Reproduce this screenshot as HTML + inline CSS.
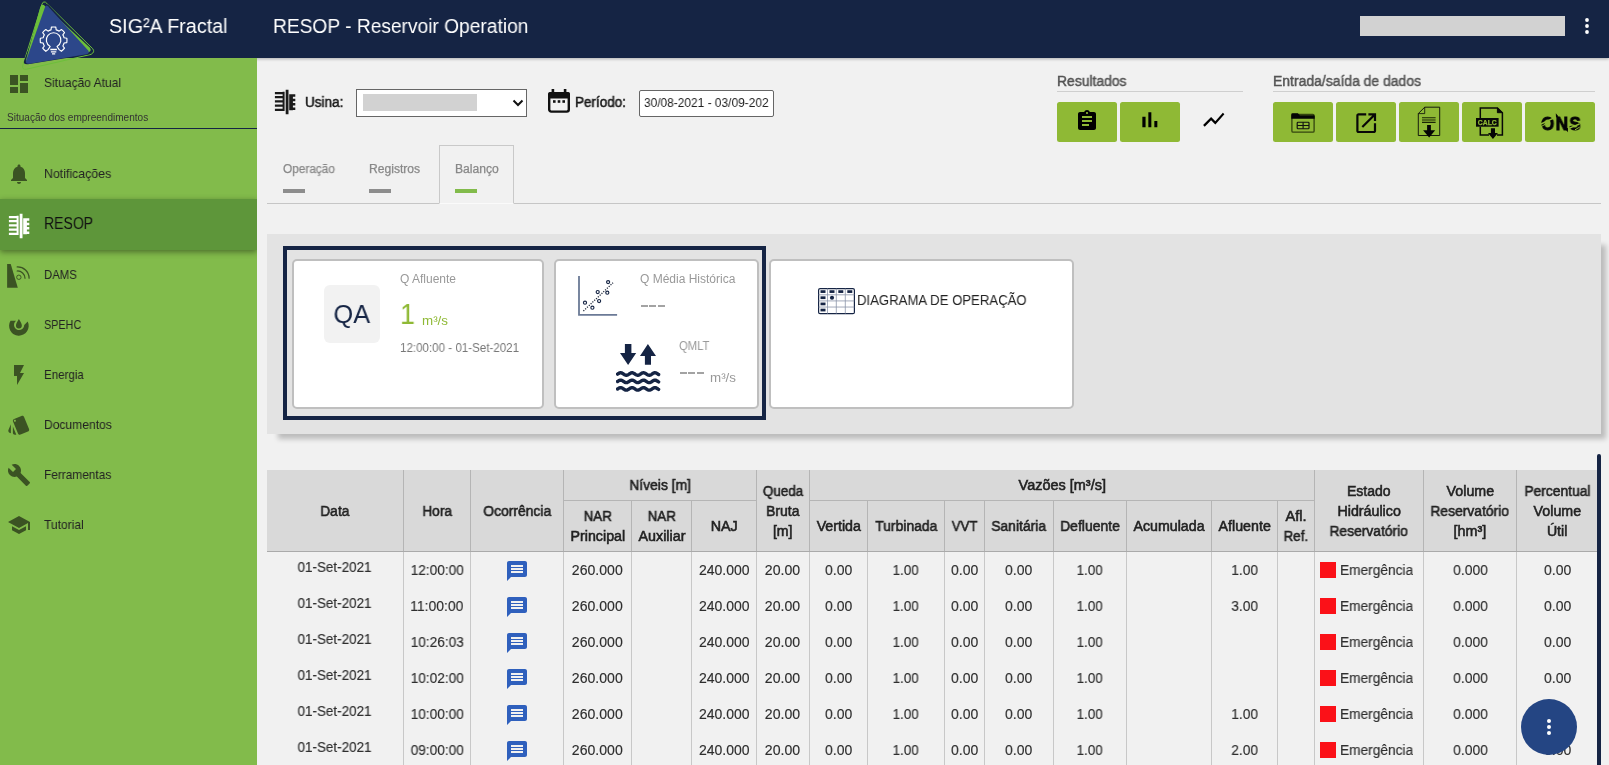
<!DOCTYPE html>
<html lang="pt-BR">
<head>
<meta charset="utf-8">
<title>RESOP - Reservoir Operation</title>
<style>
*{box-sizing:border-box;margin:0;padding:0}
html,body{width:1609px;height:765px;overflow:hidden;background:#f1f1f1;font-family:"Liberation Sans",sans-serif;color:#222}
.abs{position:absolute}
.sx{display:inline-block;white-space:nowrap;will-change:transform}
#hdr{position:absolute;left:0;top:0;width:1609px;height:58px;background:#152444;box-shadow:0 1px 3px rgba(0,0,0,.28);z-index:5}
#hdr .t{position:absolute;color:#fff;font-size:20px;white-space:nowrap;top:15px;line-height:22px}
#side{position:absolute;left:0;top:58px;width:257px;height:707px;background:#82bb4b;z-index:6;overflow:hidden}
.mi{position:absolute;left:0;width:257px;height:50px}
.mi svg{position:absolute;left:7px;top:13px;width:24px;height:24px;fill:#3b5323}
.mi .tx{position:absolute;left:44px;top:17px;font-size:13px;line-height:16px;color:#222;white-space:nowrap}
.lbl{position:absolute;font-size:14px;line-height:16px;color:#555;white-space:nowrap;-webkit-text-stroke:.45px #505050}
.gb{position:absolute;top:102px;height:40px;background:#8fb935;border-radius:2.500px}
.gb svg{position:absolute;will-change:transform}
.tab{position:absolute;font-size:12px;color:#888;white-space:nowrap;top:162px;line-height:14px;-webkit-text-stroke:.25px #888}
.tbar{position:absolute;top:189px;height:4px;width:22px;background:#8d8d8d}
.card{position:absolute;top:259px;height:150px;background:#fff;border:2px solid #bfbfbf;border-radius:5px}
.cl{position:absolute;font-size:12px;color:#999;white-space:nowrap;line-height:14px}
table{position:absolute;left:267px;top:470px;border-collapse:collapse;table-layout:fixed;width:1330px;font-size:14px}
th{background:#d9d9d9;font-weight:normal;color:#222;border-left:1px solid #b5b5b5;line-height:20px;-webkit-text-stroke:.55px #222;padding:2px 0 0 1px;vertical-align:middle;text-align:center;font-size:14px}
th.nb{border-left:none;padding-left:0}
th.g{border-bottom:1px solid #b5b5b5;padding-top:0}
tr.h2 th{border-bottom:1px solid #aaa;padding-top:0}
th.r2{border-bottom:1px solid #aaa}
td{height:36px;text-align:center;color:#2e2e2e;-webkit-text-stroke:.15px #2e2e2e;border-left:1px solid #c8c8c8;padding:2px 0 0 1px;vertical-align:middle;white-space:nowrap;line-height:20px}
td.nb{border-left:none;padding-left:0}
td.d .sx{position:relative;top:-3px}
td svg{display:block;margin:2px auto 0}
.sq{display:inline-block;width:16px;height:16px;background:#fb1118;vertical-align:-3px;margin-right:4px}
</style>
</head>
<body>
<!-- HEADER -->
<div id="hdr">
  <div class="t" style="left:109px"><span class="sx" style="transform-origin:0 50%;transform:scaleX(0.9872);">SIG²A Fractal</span></div>
  <div class="t" style="left:273px"><span class="sx" style="transform-origin:0 50%;transform:scaleX(0.9587);">RESOP - Reservoir Operation</span></div>
  <div class="abs" style="left:1360px;top:16px;width:205px;height:19.500px;background:#d2d2d2"></div>
  <svg class="abs" style="left:1575px;top:14px" width="24" height="24" viewBox="0 0 24 24" fill="#fff"><circle cx="12" cy="6" r="1.900"/><circle cx="12" cy="12" r="1.900"/><circle cx="12" cy="18" r="1.900"/></svg>
</div>
<!-- LOGO -->
<svg class="abs" style="left:10px;top:0;z-index:9" width="100" height="75" viewBox="0 0 100 75">
  <path d="M35.500 2.200 L82.700 48.700 Q85.300 52 81 54.400 L16.500 69.200 Q11.800 70 12.800 65.500 L32 4 Q33.300 .8 35.500 2.200Z" fill="none" stroke="#6cbf3a" stroke-width="1"/>
  <path d="M38.300 4.800 L81.300 50 Q83 53 79.500 54.200 L18 64.200 Q13 64.800 14 61 L35 6 Q36.300 3.300 38.300 4.800Z" fill="#152444"/>
  <path d="M33.800 5 L80 47.800 Q82 50.800 78.500 52.300 L20 63 Q15 63.500 16 60 L29.800 8.800 Q31.200 3.500 33.800 5Z" fill="#6cbf3a"/>
  <path d="M38 6.200 L78.200 50.500 Q80 53.400 76.500 54.200 L19.500 63.800 Q15 64.300 16.200 60.300 L34.800 7.700 Q36 4.500 38 6.200Z" fill="#2c478a"/>
  <g fill="none" stroke="#fff" stroke-width="1.150" stroke-linejoin="round"><path d="M38.03 49.65L35.81 51.30A13.40 13.40 0 0 1 32.70 48.19L34.35 45.97A10.80 10.80 0 0 1 33.12 43.00L30.38 42.60A13.40 13.40 0 0 1 30.38 38.20L33.12 37.80A10.80 10.80 0 0 1 34.35 34.83L32.70 32.61A13.40 13.40 0 0 1 35.81 29.50L38.03 31.15A10.80 10.80 0 0 1 41.00 29.92L41.40 27.18A13.40 13.40 0 0 1 45.80 27.18L46.20 29.92A10.80 10.80 0 0 1 49.17 31.15L51.39 29.50A13.40 13.40 0 0 1 54.50 32.61L52.85 34.83A10.80 10.80 0 0 1 54.08 37.80L56.82 38.20A13.40 13.40 0 0 1 56.82 42.60L54.08 43.00A10.80 10.80 0 0 1 52.85 45.97L54.50 48.19A13.40 13.40 0 0 1 51.39 51.30L49.17 49.65L47.03 46.45A7.30 7.30 0 1 0 40.17 46.45Z"/><path d="M40.300 49.500h6.600M40.900 51.800h5.400M42 53.800h3.200" stroke-width="1.300"/></g>
</svg>
<!-- SIDEBAR -->
<div id="side">
  <div class="mi" style="top:0"><svg viewBox="0 0 24 24" style="top:14px"><path d="M3 13h8V3H3v10zm0 8h8v-6H3v6zm10 0h8V11h-8v10zm0-18v6h8V3h-8z"/></svg><div class="tx"><span class="sx" style="transform-origin:0 50%;transform:scaleX(0.9273);">Situação Atual</span></div></div>
  <div class="abs" style="left:7px;top:53.500px;font-size:10px;line-height:12px;color:#333;white-space:nowrap"><span class="sx" style="transform-origin:0 50%;transform:scaleX(1.0036);">Situação dos empreendimentos</span></div>
  <div class="abs" style="left:0;top:70px;width:257px;height:1px;background:#152444"></div>
  <div class="mi" style="top:91px"><svg viewBox="0 0 24 24"><path d="M12 22c1.100 0 2-.900 2-2h-4c0 1.100.890 2 2 2zm6-6v-5c0-3.070-1.640-5.640-4.500-6.320V4c0-.830-.670-1.500-1.500-1.500s-1.500.670-1.500 1.500v.680C7.630 5.360 6 7.920 6 11v5l-2 2v1h16v-1l-2-2z"/></svg><div class="tx"><span class="sx" style="transform-origin:0 50%;transform:scaleX(0.9502);">Notificações</span></div></div>
  <div class="mi" style="top:141px;height:51px;background:#5e963a;box-shadow:0 2px 6px rgba(0,0,0,.42)">
    <svg viewBox="0 0 24 28" style="top:13px;fill:#fff;height:28px;overflow:visible"><path d="M1.900 3.9h9v2.300h-9zM1.900 8.0h9v2.300h-9zM1.900 12.2h9v2.300h-9zM1.900 16.5h9v2.300h-9zM1.900 20.7h9v2.300h-9zM9.600 3.850h2v19.100h-2zM12.700 1.800h2.800v24.400h-2.800zM16.200 6.200h3.700v16.100h-3.700zM19.500 6.3h2.800v2.500h-2.800zM19.500 10.8h2.800v2.500h-2.800zM19.500 15.1h2.800v2.500h-2.800zM19.500 19.6h2.800v2.500h-2.800z"/></svg>
    <div class="tx" style="font-size:16px;top:15px;line-height:20px;color:#111"><span class="sx" style="transform-origin:0 50%;transform:scaleX(0.8769);">RESOP</span></div>
  </div>
  <div class="mi" style="top:192px"><svg viewBox="0 0 24 26" style="height:26px;overflow:visible"><path d="M.1 1.100H3.700L10.800 24.700H.1z"/><circle cx="11.850" cy="14.250" r="2.200" fill="none" stroke="#3b5323" stroke-width=".95"/><path d="M10.200 8A7.400 7.400 0 0 1 18 15.200M10.200 3.900A11.500 11.500 0 0 1 22.100 15.200" fill="none" stroke="#3b5323" stroke-width="1.250" stroke-linecap="round"/></svg><div class="tx"><span class="sx" style="transform-origin:0 50%;transform:scaleX(0.8728);">DAMS</span></div></div>
  <div class="mi" style="top:242px"><svg viewBox="0 0 24 24" style="overflow:visible"><path d="M3.500 7.800A9.800 9.800 0 1 0 20.700 8.600L17.200 11.900A5.100 5.100 0 1 1 9.070 7.800Z"/><path d="M11.900 6C13.300 8.300 14.850 10.600 14.850 12.600a2.950 2.950 0 0 1-5.900 0C8.950 10.600 10.500 8.300 11.900 6z"/></svg><div class="tx"><span class="sx" style="transform-origin:0 50%;transform:scaleX(0.8301);">SPEHC</span></div></div>
  <div class="mi" style="top:292px"><svg viewBox="0 0 24 24"><path d="M7 2v11h3v9l7-12h-4l4-8z"/></svg><div class="tx"><span class="sx" style="transform-origin:0 50%;transform:scaleX(0.8878);">Energia</span></div></div>
  <div class="mi" style="top:342px"><svg viewBox="0 0 24 24"><path d="M2.530 19.650l1.340.560v-9.030l-2.430 5.860c-.410 1.020.080 2.190 1.090 2.610zm19.500-3.700L17.070 3.980c-.310-.750-1.040-1.210-1.810-1.230-.260 0-.530.040-.790.150L7.100 5.950c-.750.310-1.210 1.030-1.230 1.800-.010.270.040.540.150.800l4.960 11.970c.310.760 1.050 1.220 1.830 1.230.260 0 .520-.050.770-.150l7.360-3.050c1.020-.420 1.510-1.590 1.090-2.600zM7.880 8.750c-.550 0-1-.450-1-1s.450-1 1-1 1 .450 1 1-.450 1-1 1zm-2 11c0 1.100.900 2 2 2h1.450l-3.450-8.340v6.340z"/></svg><div class="tx"><span class="sx" style="transform-origin:0 50%;transform:scaleX(0.9288);">Documentos</span></div></div>
  <div class="mi" style="top:392px"><svg viewBox="0 0 24 24"><path d="M22.700 19l-9.100-9.100c.900-2.300.400-5-1.500-6.900-2-2-5-2.400-7.400-1.300L9 6 6 9 1.600 4.700C.4 7.100.9 10.100 2.900 12.100c1.900 1.900 4.600 2.400 6.900 1.500l9.100 9.100c.4.400 1 .4 1.400 0l2.300-2.300c.5-.4.500-1.100.1-1.400z"/></svg><div class="tx"><span class="sx" style="transform-origin:0 50%;transform:scaleX(0.9129);">Ferramentas</span></div></div>
  <div class="mi" style="top:442px"><svg viewBox="0 0 24 24"><path d="M5 13.180v4L12 21l7-3.820v-4L12 17l-7-3.820zM12 3L1 9l11 6 9-4.910V17h2V9L12 3z"/></svg><div class="tx"><span class="sx" style="transform-origin:0 50%;transform:scaleX(0.9279);">Tutorial</span></div></div>
</div>
<!-- TOOLBAR -->
<svg class="abs" style="left:273px;top:87.500px;overflow:visible" width="24" height="28" viewBox="0 0 24 28" fill="#1a1a1a"><path d="M1.900 3.9h9v2.300h-9zM1.900 8.0h9v2.300h-9zM1.900 12.2h9v2.300h-9zM1.900 16.5h9v2.300h-9zM1.900 20.7h9v2.300h-9zM9.600 3.850h2v19.100h-2zM12.700 1.800h2.800v24.400h-2.800zM16.200 6.200h3.700v16.100h-3.700zM19.500 6.3h2.800v2.500h-2.800zM19.500 10.8h2.800v2.500h-2.800zM19.500 15.1h2.800v2.500h-2.800zM19.500 19.6h2.800v2.500h-2.800z"/></svg>
<div class="abs" style="left:305px;top:94px;font-size:14px;line-height:16px;color:#1a1a1a;-webkit-text-stroke:.5px #1a1a1a;white-space:nowrap"><span class="sx" style="transform-origin:0 50%;transform:scaleX(0.9658);">Usina:</span></div>
<div class="abs" style="left:356px;top:89px;width:171px;height:28px;background:#fff;border:1px solid #666">
  <div class="abs" style="left:6px;top:4px;width:114px;height:17px;background:#d2d2d2"></div>
  <svg class="abs" style="left:155px;top:9px" width="12" height="8" viewBox="0 0 12 8"><path d="M1.500 1.500L6 6l4.500-4.500" fill="none" stroke="#111" stroke-width="2"/></svg>
</div>
<svg class="abs" style="left:548px;top:89px" width="22" height="24" viewBox="0 0 22 24" fill="#111"><rect x="1.200" y="4.200" width="19.600" height="18.400" rx="2" fill="none" stroke="#111" stroke-width="2.400"/><path d="M0 9.600V5a2 2 0 0 1 2-2h18a2 2 0 0 1 2 2v4.600z"/><rect x="3.600" y="0" width="2.600" height="4"/><rect x="15.800" y="0" width="2.600" height="4"/><rect x="5" y="11.200" width="2.600" height="2.600"/><rect x="9.700" y="11.200" width="2.600" height="2.600"/><rect x="14.400" y="11.200" width="2.600" height="2.600"/></svg>
<div class="abs" style="left:575px;top:94px;font-size:14px;line-height:16px;color:#1a1a1a;-webkit-text-stroke:.5px #1a1a1a;white-space:nowrap"><span class="sx" style="transform-origin:0 50%;transform:scaleX(0.9621);">Período:</span></div>
<div class="abs" style="left:639px;top:90px;width:135px;height:27px;background:#fff;border:1px solid #666;border-radius:2px;overflow:hidden">
  <div class="abs" style="left:2px;top:0;width:127.300px;height:25px;overflow:hidden"><div class="abs" style="left:1.600px;top:4px;font-size:13px;line-height:15px;color:#222;white-space:nowrap"><span class="sx" style="transform-origin:0 50%;transform:scaleX(0.9166);">30/08-2021 - 03/09-2021</span></div></div>
</div>
<!-- TABS -->
<div class="abs" style="left:267px;top:203px;width:1334px;height:1px;background:#c6c6c6"></div>
<div class="abs" style="left:439px;top:145px;width:75px;height:59px;border:1px solid #c9c9c9;border-bottom:1px solid #fafafa;background:#f1f1f1"></div>
<div class="tab" style="left:283px"><span class="sx" style="transform-origin:0 50%;transform:scaleX(0.9855);">Operação</span></div><div class="tbar" style="left:283px"></div>
<div class="tab" style="left:369px"><span class="sx" style="transform-origin:0 50%;transform:scaleX(1.0089);">Registros</span></div><div class="tbar" style="left:369px"></div>
<div class="tab" style="left:455px"><span class="sx" style="transform-origin:0 50%;transform:scaleX(1.0107);">Balanço</span></div><div class="tbar" style="left:455px;background:#82bb4b"></div>
<!-- RESULTADOS -->
<div class="lbl" style="left:1057px;top:73px"><span class="sx" style="transform-origin:0 50%;transform:scaleX(0.9912);">Resultados</span></div>
<div class="abs" style="left:1057px;top:91px;width:186px;height:1px;background:#cfcfcf"></div>
<div class="gb" style="left:1057px;width:60px"><svg style="left:18px;top:7px" width="24" height="24" viewBox="0 0 24 24" fill="#000"><path d="M19 3h-4.180C14.400 1.840 13.300 1 12 1c-1.300 0-2.400.840-2.820 2H5c-1.100 0-2 .900-2 2v14c0 1.100.900 2 2 2h14c1.100 0 2-.900 2-2V5c0-1.100-.900-2-2-2zm-7 0c.550 0 1 .450 1 1s-.450 1-1 1-1-.450-1-1 .450-1 1-1zm2 14H7v-2h7v2zm3-4H7v-2h10v2zm0-4H7V7h10v2z"/></svg></div>
<div class="gb" style="left:1120px;width:60px"><svg style="left:16.950px;top:5.200px" width="25.700" height="25.700" viewBox="0 0 24 24" fill="#000"><path d="M5 9.200h3V19H5zM10.600 5h2.800v14h-2.800zm5.600 8H19v6h-2.800z"/></svg></div>
<svg class="abs" style="left:1200.700px;top:107px" width="25.500" height="25.500" viewBox="0 0 24 24" fill="#000"><path d="M3.500 18.490l6-6.010 4 4L22 6.920l-1.410-1.410-7.090 7.970-4-4L2 16.990z"/></svg>
<!-- ENTRADA/SAIDA -->
<div class="lbl" style="left:1273px;top:73px"><span class="sx" style="transform-origin:0 50%;transform:scaleX(0.9957);">Entrada/saída de dados</span></div>
<div class="abs" style="left:1273px;top:91px;width:322px;height:1px;background:#cfcfcf"></div>
<div class="gb" style="left:1273px;width:60px"><svg style="left:18px;top:11px" width="24" height="20" viewBox="0 0 24 20"><rect x=".9" y="1.500" width="22.200" height="17.600" rx="1.200" fill="none" stroke="#34440f" stroke-width="1.300"/><path d="M.3 1.200Q.3 .2 1.300 .2H6.800L8.800 2.200H22.700Q23.700 2.200 23.700 3.200V5.700H.3z" fill="#050505"/><rect x="6.200" y="9.200" width="11.800" height="6.500" rx=".8" fill="none" stroke="#111" stroke-width="1.150"/><path d="M6.200 12.450h11.800M12.100 9.200v6.500" stroke="#111" stroke-width="1.150" fill="none"/></svg></div>
<div class="gb" style="left:1336px;width:60px"><svg style="left:16.700px;top:7.600px" width="26.400" height="26.400" viewBox="0 0 24 24" fill="#080808"><path d="M19 19H5V5h7V3H5c-1.110 0-2 .900-2 2v14c0 1.100.890 2 2 2h14c1.100 0 2-.900 2-2v-7h-2v7zM14 3v2h3.590l-9.830 9.830 1.410 1.410L19 6.410V10h2V3h-7z"/></svg></div>
<div class="gb" style="left:1399px;width:60px"><svg style="left:0;top:0" width="60" height="40" viewBox="0 0 60 40"><path d="M25.700 5.200H40.700V33.500H19.300V11.600Z" fill="none" stroke="#0a0a0a" stroke-width=".9"/><path d="M25.700 5.200V11.600H19.300" fill="none" stroke="#0a0a0a" stroke-width=".8"/><path d="M23 15.700h13.600M23 18h13.600M23 20.400h13.600" stroke="#1a2505" stroke-width="1.100"/><path d="M28.100 23.100h3.800v5.200h4.300l-6.050 7.300-6.050-7.300h4z" fill="#050505"/></svg></div>
<div class="gb" style="left:1462px;width:60px"><svg style="left:0;top:0" width="60" height="40" viewBox="0 0 60 40"><path d="M18.300 16V6H35.400L40.400 10.700V32.900H35M27 32.900H18.300V24.700" fill="none" stroke="#080808" stroke-width="1.500"/><path d="M35.400 6V10.700H40.400Z" fill="#080808" stroke="#080808" stroke-width="1"/><rect x="14" y="16" width="22.600" height="8.700" fill="#080808"/><text x="25.300" y="23.100" font-family="Liberation Sans,sans-serif" font-size="7.400" font-weight="bold" fill="#8fb935" stroke="#8fb935" stroke-width=".25" text-anchor="middle" textLength="19" lengthAdjust="spacingAndGlyphs">CALC</text><path d="M28.900 26.300h4.100v4.800h2.900l-4.950 5.900-4.950-5.900h2.900z" fill="#050505"/></svg></div>
<div class="gb" style="left:1525px;width:70px"><div class="abs" style="left:16.200px;top:10.500px;font-size:19px;line-height:22px;font-weight:bold;color:#050505;-webkit-text-stroke:.9px #050505;white-space:nowrap"><span class="sx" style="transform-origin:0 50%;transform:scaleX(0.8928);letter-spacing:1.6px;">ONS</span></div><svg style="left:0;top:0" width="70" height="40"><path d="M30.800 11.200L33.500 14.500L31 15.500ZM42.800 30.200L40 26.500L43 26Z" fill="#050505"/><path d="M16 22L29 15.800M44.500 26.200L54.500 22" stroke="#8fb935" stroke-width="1.400"/><path d="M15.600 25L20 22.300M50 27.800L54.800 25" stroke="#8fb935" stroke-width="1"/></svg></div>
<!-- PANEL -->
<div class="abs" style="left:267px;top:234px;width:1334px;height:200px;background:#e3e3e3;box-shadow:8px 8px 5px -3px rgba(0,0,0,.22)"></div>
<div class="abs" style="left:283px;top:246px;width:483px;height:174px;border:4px solid #152444"></div>
<div class="card" style="left:292px;width:252px">
  <div class="abs" style="left:30px;top:24px;width:56px;height:58px;background:#f2f2f2;border-radius:6px;text-align:center;font-size:26px;line-height:58px;color:#152444"><span class="sx" style="transform-origin:50% 50%;transform:scaleX(0.9758);">QA</span></div>
  <div class="cl" style="left:106px;top:11px"><span class="sx" style="transform-origin:0 50%;transform:scaleX(0.9999);">Q Afluente</span></div>
  <div class="abs" style="left:106px;top:35px;font-size:30px;line-height:36px;color:#8fb935"><span class="sx" style="transform-origin:0 50%;transform:scaleX(0.8959);">1</span></div>
  <div class="abs" style="left:128px;top:52px;font-size:13px;line-height:16px;color:#8fb935"><span class="sx" style="transform-origin:0 50%;transform:scaleX(1.0278);">m³/s</span></div>
  <div class="abs" style="left:106px;top:80px;font-size:12px;line-height:14px;color:#777;white-space:nowrap"><span class="sx" style="transform-origin:0 50%;transform:scaleX(0.9645);">12:00:00 - 01-Set-2021</span></div>
</div>
<div class="card" style="left:554px;width:205px">
  <svg class="abs" style="left:20px;top:12px" width="44" height="46" viewBox="0 0 44 46"><path d="M3 3.100V41.900H41.100" fill="none" stroke="#6b7a96" stroke-width="1.800"/><path d="M7.400 38L37 9.800" stroke="#222b3d" stroke-width="1.300" stroke-dasharray="1.200 1.300"/><g fill="#fff" stroke="#152444" stroke-width="1.150"><circle cx="9" cy="29.700" r="1.550"/><circle cx="16.400" cy="34.700" r="1.550"/><circle cx="21.700" cy="19" r="1.550"/><circle cx="23.100" cy="28" r="1.550"/><circle cx="31.300" cy="19.700" r="1.550"/><circle cx="32.100" cy="9.100" r="1.550"/></g></svg>
  <div class="cl" style="left:84px;top:11px"><span class="sx" style="transform-origin:0 50%;transform:scaleX(0.9996);">Q Média Histórica</span></div>
  <div class="abs" style="left:85px;top:44px;width:24px;height:1.500px;background:repeating-linear-gradient(90deg,#a3a3a3 0 7px,transparent 7px 8.300px)"></div>
  <svg class="abs" style="left:60px;top:82px" width="48" height="52" viewBox="0 0 48 52" fill="#152444"><path d="M8.900 .9h6.500v9.100h4.800L12.100 22 4 10h4.900zM31.900 .9L40 12.900h-5V21.800h-6.100V12.900H24z"/><g fill="none" stroke="#152444" stroke-width="3.400" stroke-linecap="round" stroke-linejoin="round"><path d="M1.6 31.09L2.1 30.75L2.6 30.43L3.1 30.15L3.6 29.93L4.1 29.80L4.6 29.75L5.1 29.80L5.6 29.93L6.1 30.15L6.6 30.43L7.1 30.75L7.6 31.09L8.1 31.43L8.6 31.73L9.1 31.98L9.6 32.15L10.1 32.24L10.6 32.24L11.1 32.14L11.6 31.96L12.1 31.70L12.6 31.40L13.1 31.06L13.6 30.72L14.1 30.40L14.6 30.13L15.1 29.92L15.6 29.79L16.1 29.75L16.6 29.81L17.1 29.95L17.6 30.18L18.1 30.46L18.6 30.79L19.1 31.13L19.6 31.46L20.1 31.76L20.6 32.00L21.1 32.17L21.6 32.24L22.1 32.23L22.6 32.12L23.1 31.93L23.6 31.67L24.1 31.36L24.6 31.03L25.1 30.69L25.6 30.37L26.1 30.10L26.6 29.90L27.1 29.78L27.6 29.75L28.1 29.82L28.6 29.97L29.1 30.20L29.6 30.49L30.1 30.82L30.6 31.16L31.1 31.49L31.6 31.79L32.1 32.02L32.6 32.18L33.1 32.25L33.6 32.22L34.1 32.11L34.6 31.91L35.1 31.64L35.6 31.33L36.1 30.99L36.6 30.65L37.1 30.34L37.6 30.08L38.1 29.88L38.6 29.77L39.1 29.75L39.6 29.83L40.1 29.99L40.6 30.23L41.1 30.52L41.6 30.85L42.1 31.20L42.6 31.52"/><path d="M1.6 38.49L2.1 38.15L2.6 37.83L3.1 37.55L3.6 37.33L4.1 37.20L4.6 37.15L5.1 37.20L5.6 37.33L6.1 37.55L6.6 37.83L7.1 38.15L7.6 38.49L8.1 38.83L8.6 39.13L9.1 39.38L9.6 39.55L10.1 39.64L10.6 39.64L11.1 39.54L11.6 39.36L12.1 39.10L12.6 38.80L13.1 38.46L13.6 38.12L14.1 37.80L14.6 37.53L15.1 37.32L15.6 37.19L16.1 37.15L16.6 37.21L17.1 37.35L17.6 37.58L18.1 37.86L18.6 38.19L19.1 38.53L19.6 38.86L20.1 39.16L20.6 39.40L21.1 39.57L21.6 39.64L22.1 39.63L22.6 39.52L23.1 39.33L23.6 39.07L24.1 38.76L24.6 38.43L25.1 38.09L25.6 37.77L26.1 37.50L26.6 37.30L27.1 37.18L27.6 37.15L28.1 37.22L28.6 37.37L29.1 37.60L29.6 37.89L30.1 38.22L30.6 38.56L31.1 38.89L31.6 39.19L32.1 39.42L32.6 39.58L33.1 39.65L33.6 39.62L34.1 39.51L34.6 39.31L35.1 39.04L35.6 38.73L36.1 38.39L36.6 38.05L37.1 37.74L37.6 37.48L38.1 37.28L38.6 37.17L39.1 37.15L39.6 37.23L40.1 37.39L40.6 37.63L41.1 37.92L41.6 38.25L42.1 38.60L42.6 38.92"/><path d="M1.6 45.99L2.1 45.65L2.6 45.33L3.1 45.05L3.6 44.83L4.1 44.70L4.6 44.65L5.1 44.70L5.6 44.83L6.1 45.05L6.6 45.33L7.1 45.65L7.6 45.99L8.1 46.33L8.6 46.63L9.1 46.88L9.6 47.05L10.1 47.14L10.6 47.14L11.1 47.04L11.6 46.86L12.1 46.60L12.6 46.30L13.1 45.96L13.6 45.62L14.1 45.30L14.6 45.03L15.1 44.82L15.6 44.69L16.1 44.65L16.6 44.71L17.1 44.85L17.6 45.08L18.1 45.36L18.6 45.69L19.1 46.03L19.6 46.36L20.1 46.66L20.6 46.90L21.1 47.07L21.6 47.14L22.1 47.13L22.6 47.02L23.1 46.83L23.6 46.57L24.1 46.26L24.6 45.93L25.1 45.59L25.6 45.27L26.1 45.00L26.6 44.80L27.1 44.68L27.6 44.65L28.1 44.72L28.6 44.87L29.1 45.10L29.6 45.39L30.1 45.72L30.6 46.06L31.1 46.39L31.6 46.69L32.1 46.92L32.6 47.08L33.1 47.15L33.6 47.12L34.1 47.01L34.6 46.81L35.1 46.54L35.6 46.23L36.1 45.89L36.6 45.55L37.1 45.24L37.6 44.98L38.1 44.78L38.6 44.67L39.1 44.65L39.6 44.73L40.1 44.89L40.6 45.13L41.1 45.42L41.6 45.75L42.1 46.10L42.6 46.42"/></g></svg>
  <div class="cl" style="left:123px;top:78px"><span class="sx" style="transform-origin:0 50%;transform:scaleX(0.941);">QMLT</span></div>
  <div class="abs" style="left:124px;top:111px;width:24px;height:1.500px;background:repeating-linear-gradient(90deg,#a3a3a3 0 7px,transparent 7px 8.300px)"></div>
  <div class="abs" style="left:153.500px;top:109px;font-size:13px;line-height:16px;color:#999"><span class="sx" style="transform-origin:0 50%;transform:scaleX(1.0278);">m³/s</span></div>
</div>
<div class="card" style="left:769px;width:305px">
  <svg class="abs" style="left:47px;top:26.500px" width="38" height="27.200" viewBox="0 0 38 28" preserveAspectRatio="none"><rect x=".6" y=".6" width="35.800" height="25.800" rx="1.500" fill="#fff" stroke="#152444" stroke-width="1.200"/><path d="M.6 7h35.800M.6 13.300h35.800M.6 19.600h35.800M9.500 .6v25.800M18.300 .6v25.800M27.300 .6v25.800" stroke="#8a93a8" stroke-width=".8"/><g fill="#152444"><rect x="2.500" y="2.300" width="5" height="2.800"/><rect x="11.500" y="2.300" width="5" height="2.800"/><rect x="20.300" y="2.300" width="5" height="2.800"/><rect x="29.300" y="2.300" width="5" height="2.800"/><rect x="2.500" y="8.600" width="5" height="2.800"/><rect x="2.500" y="15" width="5" height="2.800"/><rect x="2.500" y="21.300" width="5" height="2.800"/><circle cx="14" cy="10" r="2.100"/></g></svg>
  <div class="abs" style="left:85.500px;top:31px;font-size:14px;line-height:16px;color:#222;white-space:nowrap"><span class="sx" style="transform-origin:0 50%;transform:scaleX(0.9399);">DIAGRAMA DE OPERAÇÃO</span></div>
</div>
<!-- TABLE -->
<table style="width:1330px"><colgroup><col style="width:136px"><col style="width:67px"><col style="width:93px"><col style="width:68px"><col style="width:60px"><col style="width:65px"><col style="width:53px"><col style="width:58px"><col style="width:77px"><col style="width:40px"><col style="width:69px"><col style="width:73px"><col style="width:85px"><col style="width:66px"><col style="width:37px"><col style="width:109px"><col style="width:93px"><col style="width:81px"></colgroup>
<thead>
<tr style="height:30px"><th rowspan="2" class="nb r2"><span class="sx" style="transform-origin:50% 50%;transform:scaleX(0.9848);">Data</span></th><th rowspan="2" class="r2"><span class="sx" style="transform-origin:50% 50%;transform:scaleX(0.976);">Hora</span></th><th rowspan="2" class="r2"><span class="sx" style="transform-origin:50% 50%;transform:scaleX(0.9907);">Ocorrência</span></th><th colspan="3" class="g"><span class="sx" style="transform-origin:50% 50%;transform:scaleX(0.9887);">Níveis [m]</span></th><th rowspan="2" class="r2"><span class="sx" style="transform-origin:50% 50%;transform:scaleX(0.9592);">Queda</span><br><span class="sx" style="transform-origin:50% 50%;transform:scaleX(0.9959);">Bruta</span><br><span class="sx" style="transform-origin:50% 50%;transform:scaleX(1.0091);">[m]</span></th><th colspan="8" class="g"><span class="sx" style="transform-origin:50% 50%;transform:scaleX(1.0329);">Vazões [m³/s]</span></th><th rowspan="2" class="r2"><span class="sx" style="transform-origin:50% 50%;transform:scaleX(0.9985);">Estado</span><br><span class="sx" style="transform-origin:50% 50%;transform:scaleX(1.019);">Hidráulico</span><br><span class="sx" style="transform-origin:50% 50%;transform:scaleX(0.9881);">Reservatório</span></th><th rowspan="2" class="r2"><span class="sx" style="transform-origin:50% 50%;transform:scaleX(1.0177);">Volume</span><br><span class="sx" style="transform-origin:50% 50%;transform:scaleX(0.9906);">Reservatório</span><br><span class="sx" style="transform-origin:50% 50%;transform:scaleX(1.0263);">[hm³]</span></th><th rowspan="2" class="r2"><span class="sx" style="transform-origin:50% 50%;transform:scaleX(0.9879);">Percentual</span><br><span class="sx" style="transform-origin:50% 50%;transform:scaleX(1.0177);">Volume</span><br><span class="sx" style="transform-origin:50% 50%;transform:scaleX(1.0097);">Útil</span></th></tr>
<tr class="h2" style="height:51px"><th><span class="sx" style="transform-origin:50% 50%;transform:scaleX(0.9515);">NAR</span><br><span class="sx" style="transform-origin:50% 50%;transform:scaleX(1.0154);">Principal</span></th><th><span class="sx" style="transform-origin:50% 50%;transform:scaleX(0.9515);">NAR</span><br><span class="sx" style="transform-origin:50% 50%;transform:scaleX(1.0223);">Auxiliar</span></th><th><span class="sx" style="transform-origin:50% 50%;transform:scaleX(1.0218);">NAJ</span></th><th><span class="sx" style="transform-origin:50% 50%;transform:scaleX(1.0169);">Vertida</span></th><th><span class="sx" style="transform-origin:50% 50%;transform:scaleX(0.9904);">Turbinada</span></th><th><span class="sx" style="transform-origin:50% 50%;transform:scaleX(0.9448);">VVT</span></th><th><span class="sx" style="transform-origin:50% 50%;transform:scaleX(0.9903);">Sanitária</span></th><th><span class="sx" style="transform-origin:50% 50%;transform:scaleX(0.9949);">Defluente</span></th><th><span class="sx" style="transform-origin:50% 50%;transform:scaleX(1.014);">Acumulada</span></th><th><span class="sx" style="transform-origin:50% 50%;transform:scaleX(1.0166);">Afluente</span></th><th><span class="sx" style="transform-origin:50% 50%;transform:scaleX(1.0443);">Afl.</span><br><span class="sx" style="transform-origin:50% 50%;transform:scaleX(0.9549);">Ref.</span></th></tr>
</thead>
<tbody>
<tr><td class="nb d"><span class="sx" style="transform-origin:50% 50%;transform:scaleX(0.9594);">01-Set-2021</span></td><td><span class="sx" style="transform-origin:50% 50%;transform:scaleX(0.973);">12:00:00</span></td><td><svg width="24" height="24" viewBox="0 0 24 24" fill="#2f60bd"><path d="M20 2H4c-1.100 0-1.990.900-1.990 2L2 22l4-4h14c1.100 0 2-.900 2-2V4c0-1.100-.900-2-2-2zm-2 12H6v-2h12v2zm0-3H6V9h12v2zm0-3H6V6h12v2z"/></svg></td><td><span class="sx" style="transform-origin:50% 50%;transform:scaleX(1.0063);">260.000</span></td><td></td><td><span class="sx" style="transform-origin:50% 50%;transform:scaleX(1.0004);">240.000</span></td><td><span class="sx" style="transform-origin:50% 50%;transform:scaleX(1.0081);">20.00</span></td><td><span class="sx" style="transform-origin:50% 50%;transform:scaleX(0.9956);">0.00</span></td><td><span class="sx" style="transform-origin:50% 50%;transform:scaleX(0.9552);">1.00</span></td><td><span class="sx" style="transform-origin:50% 50%;transform:scaleX(0.9956);">0.00</span></td><td><span class="sx" style="transform-origin:50% 50%;transform:scaleX(0.9956);">0.00</span></td><td><span class="sx" style="transform-origin:50% 50%;transform:scaleX(0.9552);">1.00</span></td><td></td><td><span class="sx" style="transform-origin:50% 50%;transform:scaleX(0.9772);">1.00</span></td><td></td><td style="text-align:left;padding-left:5px"><span class="sq"></span><span class="sx" style="transform-origin:0 50%;transform:scaleX(0.9789);">Emergência</span></td><td><span class="sx" style="transform-origin:50% 50%;transform:scaleX(0.9881);">0.000</span></td><td><span class="sx" style="transform-origin:50% 50%;transform:scaleX(0.9956);">0.00</span></td></tr>
<tr><td class="nb d"><span class="sx" style="transform-origin:50% 50%;transform:scaleX(0.9594);">01-Set-2021</span></td><td><span class="sx" style="transform-origin:50% 50%;transform:scaleX(0.9918);">11:00:00</span></td><td><svg width="24" height="24" viewBox="0 0 24 24" fill="#2f60bd"><path d="M20 2H4c-1.100 0-1.990.900-1.990 2L2 22l4-4h14c1.100 0 2-.900 2-2V4c0-1.100-.900-2-2-2zm-2 12H6v-2h12v2zm0-3H6V9h12v2zm0-3H6V6h12v2z"/></svg></td><td><span class="sx" style="transform-origin:50% 50%;transform:scaleX(1.0063);">260.000</span></td><td></td><td><span class="sx" style="transform-origin:50% 50%;transform:scaleX(1.0004);">240.000</span></td><td><span class="sx" style="transform-origin:50% 50%;transform:scaleX(1.0081);">20.00</span></td><td><span class="sx" style="transform-origin:50% 50%;transform:scaleX(0.9956);">0.00</span></td><td><span class="sx" style="transform-origin:50% 50%;transform:scaleX(0.9552);">1.00</span></td><td><span class="sx" style="transform-origin:50% 50%;transform:scaleX(0.9956);">0.00</span></td><td><span class="sx" style="transform-origin:50% 50%;transform:scaleX(0.9956);">0.00</span></td><td><span class="sx" style="transform-origin:50% 50%;transform:scaleX(0.9552);">1.00</span></td><td></td><td><span class="sx" style="transform-origin:50% 50%;transform:scaleX(0.9772);">3.00</span></td><td></td><td style="text-align:left;padding-left:5px"><span class="sq"></span><span class="sx" style="transform-origin:0 50%;transform:scaleX(0.9789);">Emergência</span></td><td><span class="sx" style="transform-origin:50% 50%;transform:scaleX(0.9881);">0.000</span></td><td><span class="sx" style="transform-origin:50% 50%;transform:scaleX(0.9956);">0.00</span></td></tr>
<tr><td class="nb d"><span class="sx" style="transform-origin:50% 50%;transform:scaleX(0.9594);">01-Set-2021</span></td><td><span class="sx" style="transform-origin:50% 50%;transform:scaleX(0.973);">10:26:03</span></td><td><svg width="24" height="24" viewBox="0 0 24 24" fill="#2f60bd"><path d="M20 2H4c-1.100 0-1.990.900-1.990 2L2 22l4-4h14c1.100 0 2-.900 2-2V4c0-1.100-.900-2-2-2zm-2 12H6v-2h12v2zm0-3H6V9h12v2zm0-3H6V6h12v2z"/></svg></td><td><span class="sx" style="transform-origin:50% 50%;transform:scaleX(1.0063);">260.000</span></td><td></td><td><span class="sx" style="transform-origin:50% 50%;transform:scaleX(1.0004);">240.000</span></td><td><span class="sx" style="transform-origin:50% 50%;transform:scaleX(1.0081);">20.00</span></td><td><span class="sx" style="transform-origin:50% 50%;transform:scaleX(0.9956);">0.00</span></td><td><span class="sx" style="transform-origin:50% 50%;transform:scaleX(0.9552);">1.00</span></td><td><span class="sx" style="transform-origin:50% 50%;transform:scaleX(0.9956);">0.00</span></td><td><span class="sx" style="transform-origin:50% 50%;transform:scaleX(0.9956);">0.00</span></td><td><span class="sx" style="transform-origin:50% 50%;transform:scaleX(0.9552);">1.00</span></td><td></td><td></td><td></td><td style="text-align:left;padding-left:5px"><span class="sq"></span><span class="sx" style="transform-origin:0 50%;transform:scaleX(0.9789);">Emergência</span></td><td><span class="sx" style="transform-origin:50% 50%;transform:scaleX(0.9881);">0.000</span></td><td><span class="sx" style="transform-origin:50% 50%;transform:scaleX(0.9956);">0.00</span></td></tr>
<tr><td class="nb d"><span class="sx" style="transform-origin:50% 50%;transform:scaleX(0.9594);">01-Set-2021</span></td><td><span class="sx" style="transform-origin:50% 50%;transform:scaleX(0.973);">10:02:00</span></td><td><svg width="24" height="24" viewBox="0 0 24 24" fill="#2f60bd"><path d="M20 2H4c-1.100 0-1.990.900-1.990 2L2 22l4-4h14c1.100 0 2-.900 2-2V4c0-1.100-.900-2-2-2zm-2 12H6v-2h12v2zm0-3H6V9h12v2zm0-3H6V6h12v2z"/></svg></td><td><span class="sx" style="transform-origin:50% 50%;transform:scaleX(1.0063);">260.000</span></td><td></td><td><span class="sx" style="transform-origin:50% 50%;transform:scaleX(1.0004);">240.000</span></td><td><span class="sx" style="transform-origin:50% 50%;transform:scaleX(1.0081);">20.00</span></td><td><span class="sx" style="transform-origin:50% 50%;transform:scaleX(0.9956);">0.00</span></td><td><span class="sx" style="transform-origin:50% 50%;transform:scaleX(0.9552);">1.00</span></td><td><span class="sx" style="transform-origin:50% 50%;transform:scaleX(0.9956);">0.00</span></td><td><span class="sx" style="transform-origin:50% 50%;transform:scaleX(0.9956);">0.00</span></td><td><span class="sx" style="transform-origin:50% 50%;transform:scaleX(0.9552);">1.00</span></td><td></td><td></td><td></td><td style="text-align:left;padding-left:5px"><span class="sq"></span><span class="sx" style="transform-origin:0 50%;transform:scaleX(0.9789);">Emergência</span></td><td><span class="sx" style="transform-origin:50% 50%;transform:scaleX(0.9881);">0.000</span></td><td><span class="sx" style="transform-origin:50% 50%;transform:scaleX(0.9956);">0.00</span></td></tr>
<tr><td class="nb d"><span class="sx" style="transform-origin:50% 50%;transform:scaleX(0.9594);">01-Set-2021</span></td><td><span class="sx" style="transform-origin:50% 50%;transform:scaleX(0.973);">10:00:00</span></td><td><svg width="24" height="24" viewBox="0 0 24 24" fill="#2f60bd"><path d="M20 2H4c-1.100 0-1.990.900-1.990 2L2 22l4-4h14c1.100 0 2-.900 2-2V4c0-1.100-.900-2-2-2zm-2 12H6v-2h12v2zm0-3H6V9h12v2zm0-3H6V6h12v2z"/></svg></td><td><span class="sx" style="transform-origin:50% 50%;transform:scaleX(1.0063);">260.000</span></td><td></td><td><span class="sx" style="transform-origin:50% 50%;transform:scaleX(1.0004);">240.000</span></td><td><span class="sx" style="transform-origin:50% 50%;transform:scaleX(1.0081);">20.00</span></td><td><span class="sx" style="transform-origin:50% 50%;transform:scaleX(0.9956);">0.00</span></td><td><span class="sx" style="transform-origin:50% 50%;transform:scaleX(0.9552);">1.00</span></td><td><span class="sx" style="transform-origin:50% 50%;transform:scaleX(0.9956);">0.00</span></td><td><span class="sx" style="transform-origin:50% 50%;transform:scaleX(0.9956);">0.00</span></td><td><span class="sx" style="transform-origin:50% 50%;transform:scaleX(0.9552);">1.00</span></td><td></td><td><span class="sx" style="transform-origin:50% 50%;transform:scaleX(0.9772);">1.00</span></td><td></td><td style="text-align:left;padding-left:5px"><span class="sq"></span><span class="sx" style="transform-origin:0 50%;transform:scaleX(0.9789);">Emergência</span></td><td><span class="sx" style="transform-origin:50% 50%;transform:scaleX(0.9881);">0.000</span></td><td><span class="sx" style="transform-origin:50% 50%;transform:scaleX(0.9956);">0.00</span></td></tr>
<tr><td class="nb d"><span class="sx" style="transform-origin:50% 50%;transform:scaleX(0.9594);">01-Set-2021</span></td><td><span class="sx" style="transform-origin:50% 50%;transform:scaleX(0.973);">09:00:00</span></td><td><svg width="24" height="24" viewBox="0 0 24 24" fill="#2f60bd"><path d="M20 2H4c-1.100 0-1.990.900-1.990 2L2 22l4-4h14c1.100 0 2-.900 2-2V4c0-1.100-.900-2-2-2zm-2 12H6v-2h12v2zm0-3H6V9h12v2zm0-3H6V6h12v2z"/></svg></td><td><span class="sx" style="transform-origin:50% 50%;transform:scaleX(1.0063);">260.000</span></td><td></td><td><span class="sx" style="transform-origin:50% 50%;transform:scaleX(1.0004);">240.000</span></td><td><span class="sx" style="transform-origin:50% 50%;transform:scaleX(1.0081);">20.00</span></td><td><span class="sx" style="transform-origin:50% 50%;transform:scaleX(0.9956);">0.00</span></td><td><span class="sx" style="transform-origin:50% 50%;transform:scaleX(0.9552);">1.00</span></td><td><span class="sx" style="transform-origin:50% 50%;transform:scaleX(0.9956);">0.00</span></td><td><span class="sx" style="transform-origin:50% 50%;transform:scaleX(0.9956);">0.00</span></td><td><span class="sx" style="transform-origin:50% 50%;transform:scaleX(0.9552);">1.00</span></td><td></td><td><span class="sx" style="transform-origin:50% 50%;transform:scaleX(0.9772);">2.00</span></td><td></td><td style="text-align:left;padding-left:5px"><span class="sq"></span><span class="sx" style="transform-origin:0 50%;transform:scaleX(0.9789);">Emergência</span></td><td><span class="sx" style="transform-origin:50% 50%;transform:scaleX(0.9881);">0.000</span></td><td><span class="sx" style="transform-origin:50% 50%;transform:scaleX(0.9956);">0.00</span></td></tr>
</tbody>
</table>
<div class="abs" style="left:1597px;top:454px;width:4px;height:320px;background:#152444;border-radius:2px"></div>
<!-- FAB -->
<div class="abs" style="left:1521px;top:699px;width:56px;height:56px;border-radius:50%;background:#244583;z-index:8"><svg class="abs" style="left:16px;top:16px" width="24" height="24" viewBox="0 0 24 24" fill="#fff"><circle cx="12" cy="6" r="2"/><circle cx="12" cy="12" r="2"/><circle cx="12" cy="18" r="2"/></svg></div>

</body>
</html>
